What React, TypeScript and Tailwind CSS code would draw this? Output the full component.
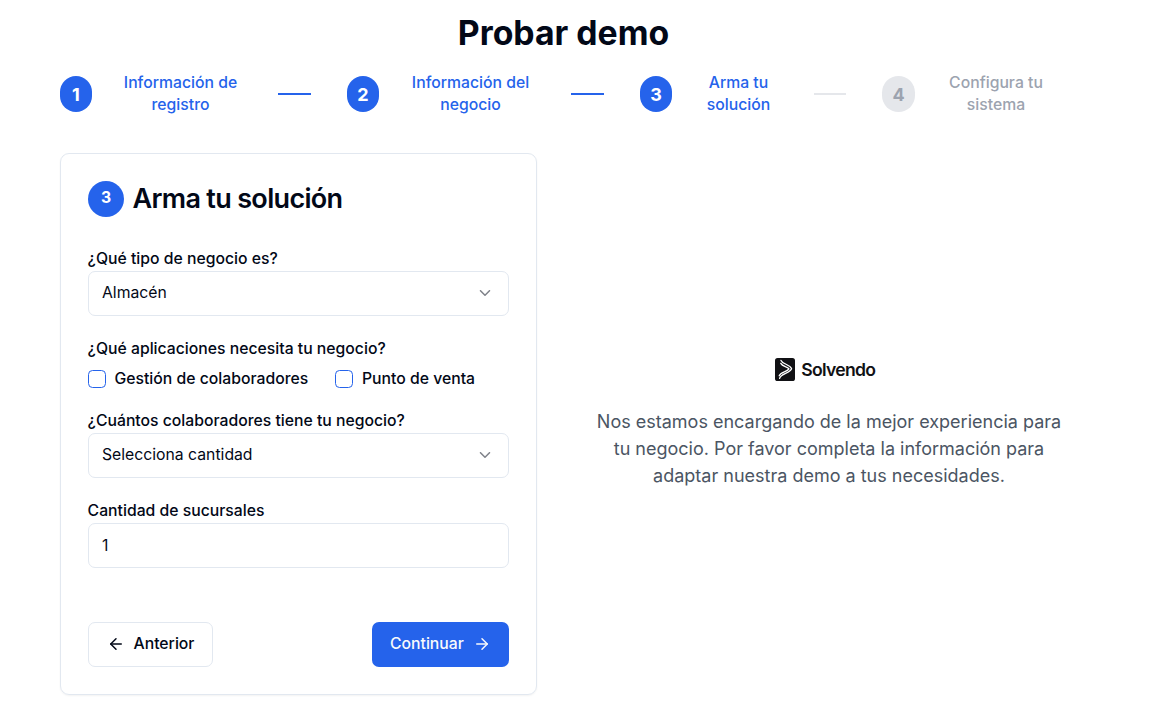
import React from "react";
import { ArrowLeft, ArrowRight, ChevronDown } from "lucide-react";

function StepCircle({ n, active, className }: { n: number; active: boolean; className: string }) {
  return (
    <div
      className={`flex h-9 shrink-0 items-center justify-center rounded-full text-[18px] font-bold ${
        active ? "bg-[#2563eb] text-white" : "bg-[#e5e7eb] text-[#9ca3af]"
      } ${className}`}
    >
      {n}
    </div>
  );
}

function StepLabel({ lines, active, className }: { lines: [string, string]; active: boolean; className: string }) {
  return (
    <div
      className={`shrink-0 text-center text-[15.75px] leading-[22px] font-medium ${
        active ? "text-[#2563eb]" : "text-[#9ca3af]"
      } ${className}`}
    >
      {lines[0]}
      <br />
      {lines[1]}
    </div>
  );
}

function Connector({ active, className }: { active: boolean; className: string }) {
  return <div className={`h-0.5 shrink-0 ${active ? "bg-[#2563eb]" : "bg-[#e5e7eb]"} ${className}`} />;
}

function SelectBox({ value }: { value: string }) {
  return (
    <button className="flex h-[45px] w-full items-center justify-between rounded-[7px] border border-[#e2e8f0] px-[13px] pb-[2px] text-[15.75px]">
      <span>{value}</span>
      <ChevronDown className="mr-[1px] size-[18px] opacity-50" />
    </button>
  );
}

function Check({ label, className }: { label: string; className: string }) {
  return (
    <label className={`flex items-center text-[15.75px] leading-[18px] font-medium ${className}`}>
      <span className="size-[18px] rounded-[4.5px] border border-[#2563eb]" />
      {label}
    </label>
  );
}

function Logo() {
  return (
    <div className="flex h-[23px] items-center gap-[6.5px] text-[#111114]">
      <svg width="20" height="23" viewBox="0 0 20 23">
        <rect width="20" height="23" rx="2.6" fill="#111114" />
        <g fill="none" stroke="#fff" strokeLinecap="round" strokeLinejoin="round">
          <path d="M6 2.4C7.6 6.4 14.8 6.2 16.6 10.8C14.8 15.4 5.6 15.6 4.6 20.4" strokeWidth="1.3" />
          <path d="M5.8 5.4C7.6 9 12.4 8 14 10.9C12 14.2 5.4 13.8 4.2 17.8" strokeWidth="1.3" />
        </g>
      </svg>
      <span className="text-[17.6px] leading-[23px] font-semibold tracking-[-0.75px]">Solvendo</span>
    </div>
  );
}

export default function App() {
  return (
    <main className="min-h-[707px] bg-white font-[Inter,sans-serif] text-[#020817]">
      <h1 className="pt-[13px] pr-[34px] text-center text-[33.75px] leading-[40px] font-bold">Probar demo</h1>
      <div className="mt-[18px] flex h-[46px] items-center pl-[60px]">
        <StepCircle n={1} active className="w-8" />
        <StepLabel lines={["Información de", "registro"]} active className="ml-[18px] w-[141px]" />
        <Connector active className="ml-[27px] w-[33px]" />
        <StepCircle n={2} active className="ml-9 w-8" />
        <StepLabel lines={["Información del", "negocio"]} active className="ml-[18px] w-[147px]" />
        <Connector active className="ml-[27px] w-[33px]" />
        <StepCircle n={3} active className="ml-9 w-8" />
        <StepLabel lines={["Arma tu", "solución"]} active className="ml-[18px] w-[97px]" />
        <Connector active={false} className="ml-[27px] w-8" />
        <StepCircle n={4} active={false} className="ml-9 w-[33px]" />
        <StepLabel lines={["Configura tu", "sistema"]} active={false} className="ml-[18px] w-[126px]" />
      </div>

      <div className="mt-9 flex pl-[60px]">
        <section className="h-[542px] w-[477px] rounded-[9px] border border-[#e2e8f0] px-[27px] pt-[27px] shadow-[0_1px_2px_0_rgb(0_0_0/0.05)]">
          <header className="flex h-9 items-center gap-[8.5px]">
            <span className="flex size-9 items-center justify-center rounded-full bg-[#2563eb] pb-[2px] text-[15.75px] font-bold text-white">
              3
            </span>
            <h2 className="text-[27px] leading-9 font-semibold tracking-[-0.675px]">Arma tu solución</h2>
          </header>

          <div className="mt-[33px] -ml-[0.4px] text-[15.75px] leading-[18px] font-medium">¿Qué tipo de negocio es?</div>
          <div className="mt-[3px]">
            <SelectBox value="Almacén" />
          </div>

          <div className="mt-[24px] -ml-[0.4px] text-[15.75px] leading-[18px] font-medium">
            ¿Qué aplicaciones necesita tu negocio?
          </div>
          <div className="mt-3 flex gap-[26.5px]">
            <Check label="Gestión de colaboradores" className="gap-[8.5px]" />
            <Check label="Punto de venta" className="gap-[9.3px]" />
          </div>

          <div className="mt-[24px] -ml-[0.4px] text-[15.75px] leading-[18px] font-medium">
            ¿Cuántos colaboradores tiene tu negocio?
          </div>
          <div className="mt-[3px]">
            <SelectBox value="Selecciona cantidad" />
          </div>

          <div className="mt-[24px] -ml-[0.4px] text-[15.75px] leading-[18px] font-medium">Cantidad de sucursales</div>
          <input
            type="text"
            defaultValue="1"
            className="mt-[3px] block h-[45px] w-full rounded-[7px] border border-[#e2e8f0] px-[13px] text-[15.75px] outline-none"
          />

          <div className="mt-[54px] flex justify-between">
            <button className="flex h-[45px] w-[125px] items-center rounded-[7px] border border-[#e2e8f0] pb-[2px] pl-[18px] text-[15.75px] font-medium">
              <ArrowLeft className="mt-[1px] mr-[8.5px] size-[18px]" />
              Anterior
            </button>
            <button className="flex h-[45px] w-[137px] items-center rounded-[7px] bg-[#2563eb] pb-[2px] pl-[18px] text-[15.75px] font-medium text-[#f8fafc]">
              Continuar
              <ArrowRight className="mt-[1px] ml-[9px] size-[18px]" />
            </button>
          </div>
        </section>

        <aside className="ml-[54px] flex w-[476px] flex-col items-center pt-[205px]">
          <div className="pr-[8px]">
            <Logo />
          </div>
          <p className="mt-[27px] text-center text-[18px] leading-[27px] text-[#4b5563]">
            Nos estamos encargando de la mejor experiencia para tu negocio. Por favor completa la información para
            adaptar nuestra demo a tus necesidades.
          </p>
        </aside>
      </div>
    </main>
  );
}
